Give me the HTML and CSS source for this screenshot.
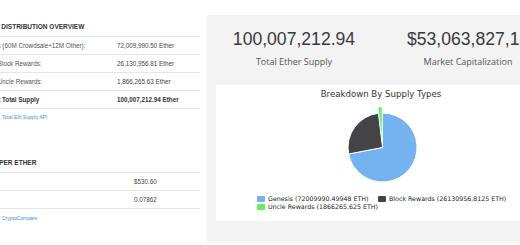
FILE: index.html
```html
<!DOCTYPE html>
<html>
<head>
<meta charset="utf-8">
<link rel="stylesheet" href="styles.css">
</head>
<body>
<div class="page">
  <div class="left">
    <div class="left-inner">
      <div class="sec-head">ETHER DISTRIBUTION OVERVIEW</div>
      <div class="row dist"><span class="lbl">Genesis (60M Crowdsale+12M Other):</span><span class="val">72,009,990.50 Ether</span></div>
      <div class="row dist"><span class="lbl">Mining Block Rewards:</span><span class="val">26,130,956.81 Ether</span></div>
      <div class="row dist"><span class="lbl">Mining Uncle Rewards:</span><span class="val">1,866,265.63 Ether</span></div>
      <div class="row dist total"><span class="lbl">Current Total Supply</span><span class="val">100,007,212.94 Ether</span></div>
      <div class="src"><a href="#">Total Eth Supply API</a></div>

      <div class="sec-head second">PRICE PER ETHER</div>
      <div class="row price"><span class="lbl">USD</span><span class="val">$530.60</span></div>
      <div class="row price"><span class="lbl">BTC</span><span class="val">0.07862</span></div>
      <div class="src src2"><a href="#">CryptoCompare</a></div>
    </div>
  </div>

  <div class="right">
    <div class="stats">
      <div class="stat">
        <div class="num">100,007,212.94</div>
        <div class="cap">Total Ether Supply</div>
      </div>
      <div class="stat">
        <div class="num num-cap">$53,063,827,186</div>
        <div class="cap">Market Capitalization</div>
      </div>
    </div>
    <div class="card">
      <div class="chart-title">Breakdown By Supply Types</div>
      <svg class="pie" width="330" height="84" viewBox="0 0 330 84">
        <path d="M166.5,47.5 L166.5,13 A34.5,34.5 0 1 1 132.61,53.97 Z" fill="#74b3ef" stroke="#fff" stroke-width="1" stroke-linejoin="round"/>
        <path d="M166.5,47.5 L132.61,53.97 A34.5,34.5 0 0 1 162.46,13.24 Z" fill="#434348" stroke="#fff" stroke-width="1" stroke-linejoin="round"/>
        <path d="M166.5,47.5 L162.46,13.24 A34.5,34.5 0 0 1 166.5,13 Z" transform="translate(-0.4,-6)" fill="#66ee66" stroke="#fff" stroke-width="0.6" stroke-linejoin="round"/>
      </svg>
      <div class="legend">
        <div class="legend-row">
          <span class="item item-wide"><i class="sw blue"></i>Genesis (72009990.49948 ETH)</span>
          <span class="item"><i class="sw dark"></i>Block Rewards (26130956.8125 ETH)</span>
        </div>
        <div class="legend-row">
          <span class="item item-wide"><i class="sw green"></i>Uncle Rewards (1866265.625 ETH)</span>
        </div>
      </div>
    </div>
  </div>
</div>
</body>
</html>
```
FILE: styles.css
```css
html, body {
  margin: 0;
  padding: 0;
  background: #fff;
}
body {
  width: 520px;
  height: 245px;
  overflow: hidden;
  font-family: "Liberation Sans", Arial, sans-serif;
}
.page {
  display: flex;
  width: 520px;
  height: 245px;
}
.left {
  flex: none;
  width: 207px;
  overflow: hidden;
}
.left-inner {
  width: 222.5px;
  margin-left: -22.5px;
  font-size: 6.3px;
  color: #444;
}
.sec-head {
  margin-top: 20px;
  line-height: 14px;
  padding-bottom: 2px;
  border-bottom: 1px solid #e6e6e6;
  font-weight: bold;
  font-size: 6.5px;
  color: #333;
  white-space: nowrap;
}
.sec-head.second {
  margin-top: 35px;
}
.row {
  display: grid;
  height: 17px;
  line-height: 17px;
  border-bottom: 1px solid #e6e6e6;
  white-space: nowrap;
}
.row.dist {
  grid-template-columns: 139.5px 1fr;
}
.row.price {
  grid-template-columns: 156.5px 1fr;
}
.lbl {
  color: #555;
}
.val {
  color: #444;
}
.row.total .lbl,
.row.total .val {
  font-weight: bold;
  color: #333;
}
.src {
  padding-top: 4px;
  line-height: 8px;
  padding-left: 24.5px;
  font-size: 5px;
}
.src2 {
  padding-top: 5px;
}
.src a {
  color: #3d8fd6;
  text-decoration: none;
}
.right {
  flex: none;
  width: 522px;
  height: 227px;
  margin-top: 15px;
  background: #f3f3f3;
}
.stats {
  display: flex;
  padding-top: 13px;
}
.stat {
  flex: none;
  width: 174px;
  text-align: center;
  white-space: nowrap;
}
.num {
  font-size: 17.6px;
  line-height: 22px;
  color: #3a3a3a;
}
.num-cap {
  padding-left: 10px;
}
.cap {
  margin-top: 6px;
  font-family: "Open Sans", sans-serif;
  font-size: 9px;
  line-height: 12px;
  color: #555;
}
.card {
  width: 330px;
  height: 136px;
  margin-top: 17px;
  margin-left: 9px;
  background: #fff;
}
.chart-title {
  padding-top: 3px;
  line-height: 12px;
  text-align: center;
  font-family: "DejaVu Sans", Verdana, sans-serif;
  font-size: 8.6px;
  color: #333;
}
.pie {
  display: block;
}
.legend {
  padding-top: 11px;
  font-family: "DejaVu Sans", Verdana, sans-serif;
  font-size: 6.3px;
  color: #222;
}
.legend-row {
  display: flex;
  padding-left: 41px;
  height: 8px;
  line-height: 8px;
  white-space: nowrap;
}
.item {
  display: flex;
  align-items: center;
}
.item-wide {
  width: 121px;
}
.sw {
  display: inline-block;
  width: 8px;
  height: 6px;
  margin-right: 3px;
  border-radius: 1px;
}
.sw.blue { background: #74b3ef; }
.sw.dark { background: #434348; }
.sw.green { background: #66ee66; }
```
